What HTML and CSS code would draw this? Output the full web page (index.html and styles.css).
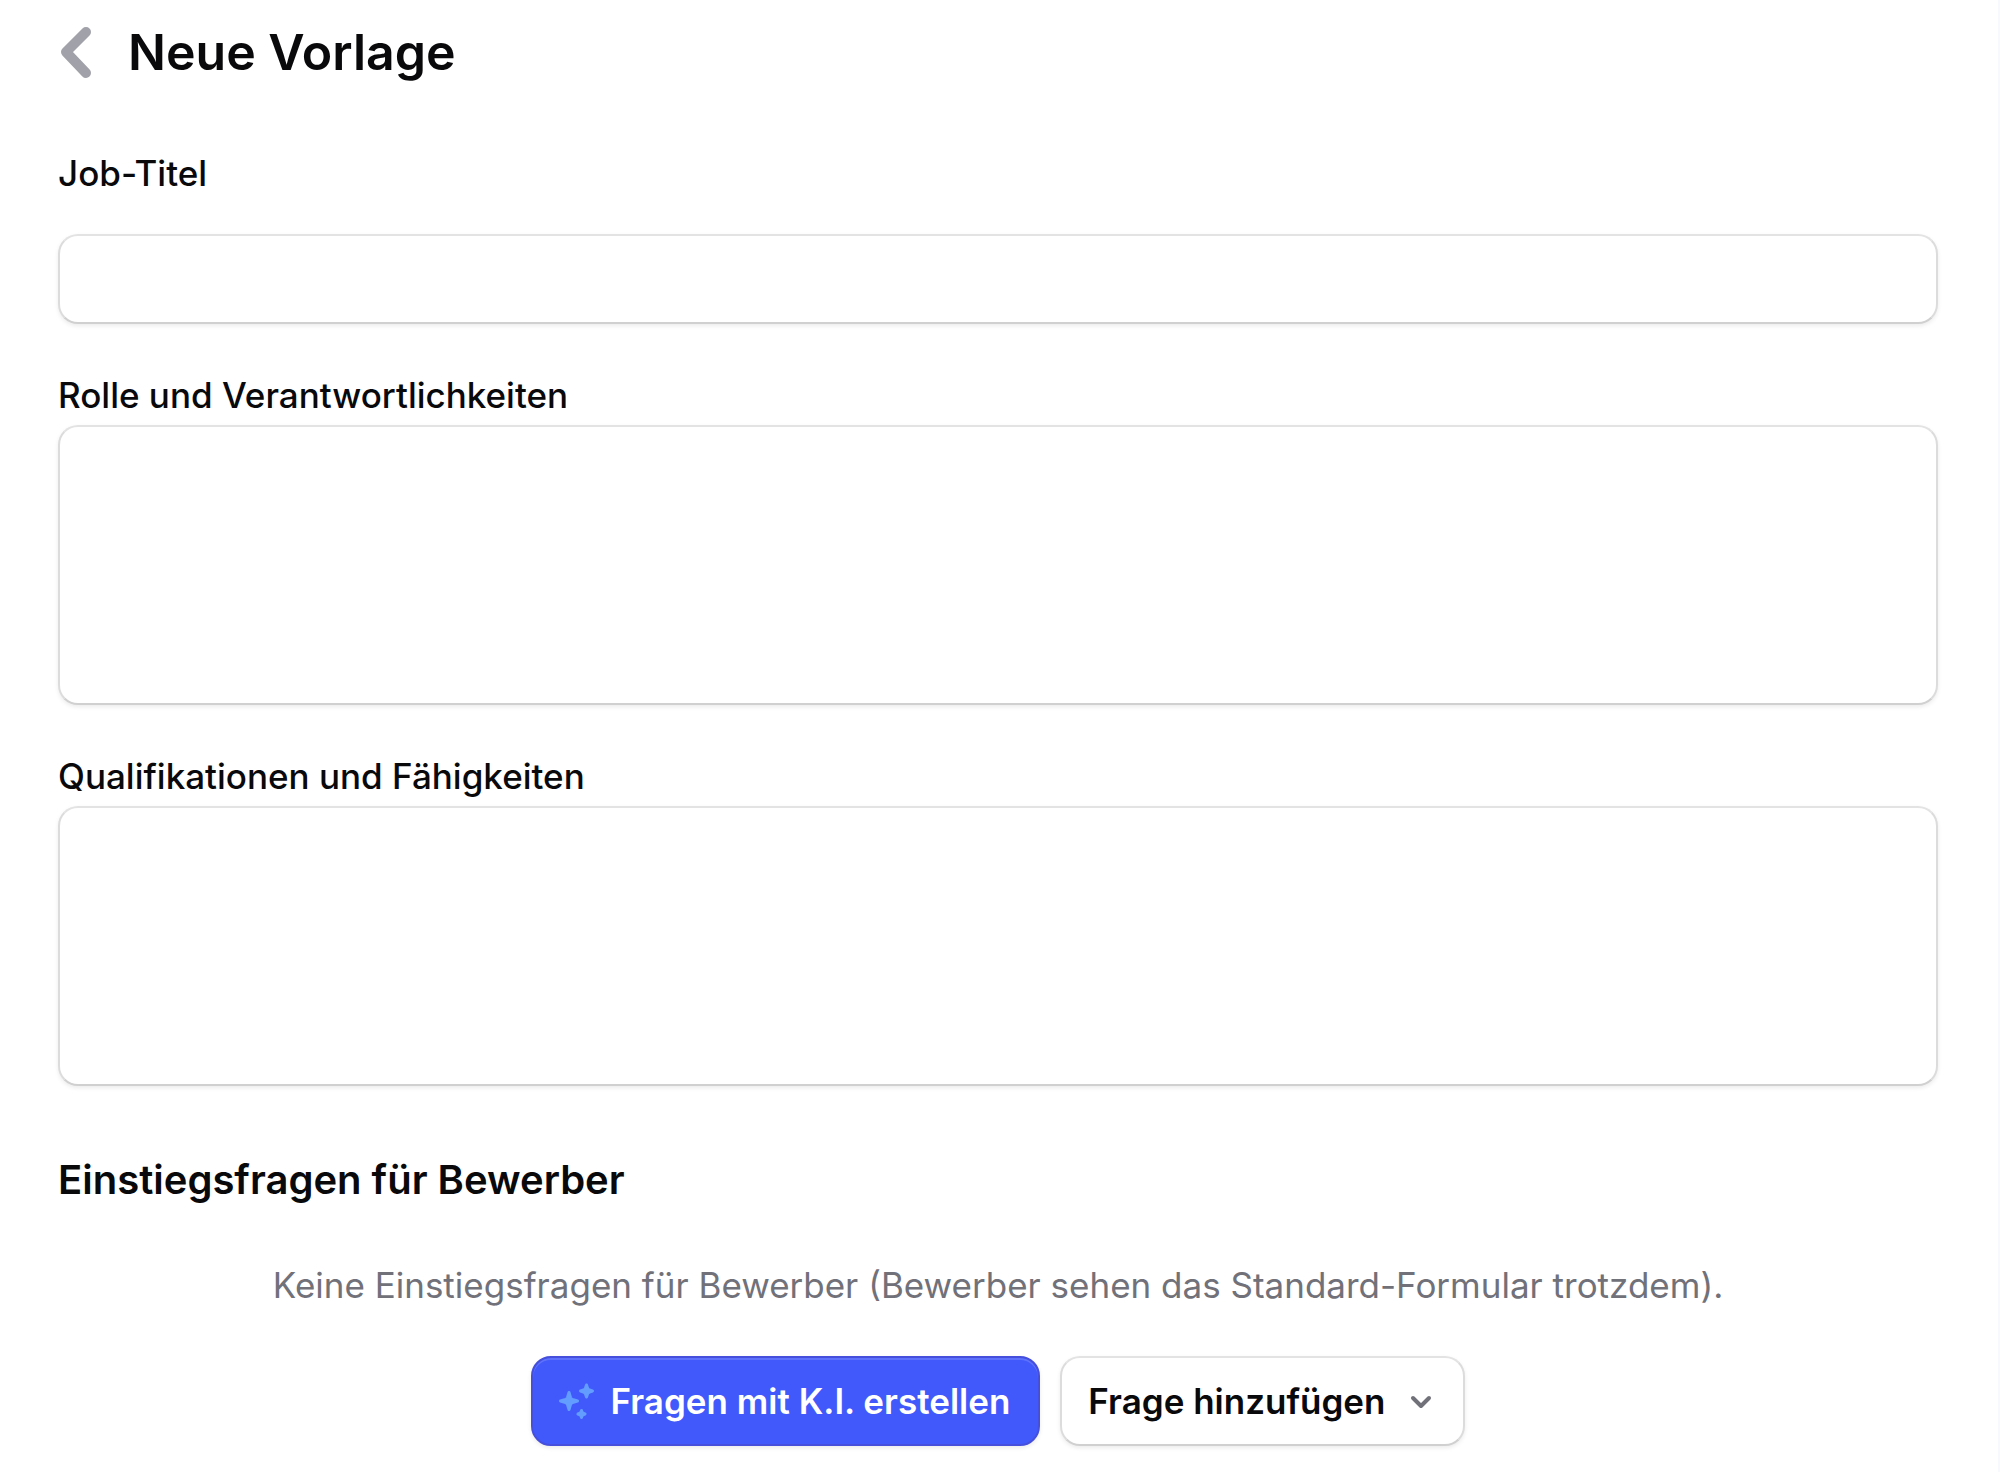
FILE: index.html
```html
<!DOCTYPE html>
<html lang="de">
<head>
  <meta charset="UTF-8" />
  <title>Neue Vorlage</title>
  <meta name="viewport" content="width=device-width, initial-scale=1" />
  <link rel="stylesheet" href="styles.css">
</head>
<body>
  <main class="page">
    <header class="page-header">
      <a class="back-link" href="#" aria-label="Zurück">
        <svg class="back-icon" viewBox="0 0 34 52" fill="none" stroke="currentColor" stroke-width="10" stroke-linecap="round" stroke-linejoin="round" aria-hidden="true">
          <path d="M28 6 L8 26 L28 47" />
        </svg>
      </a>
      <h1>Neue Vorlage</h1>
    </header>

    <form class="template-form">
      <div class="field field-title">
        <label for="jobTitle">Job-Titel</label>
        <input type="text" id="jobTitle" />
      </div>

      <div class="field">
        <label for="role">Rolle und Verantwortlichkeiten</label>
        <textarea id="role"></textarea>
      </div>

      <div class="field">
        <label for="skills">Qualifikationen und Fähigkeiten</label>
        <textarea id="skills"></textarea>
      </div>

      <section class="questions">
        <h2>Einstiegsfragen für Bewerber</h2>
        <p class="empty">Keine Einstiegsfragen für Bewerber (Bewerber sehen das Standard-Formular trotzdem).</p>
        <div class="actions">
          <button type="button" class="btn btn-primary">
            <svg class="sparkles" viewBox="0 0 36 36" fill="currentColor" stroke="currentColor" stroke-width="3" stroke-linejoin="round" aria-hidden="true">
              <path d="M10 9.500 L11.500 14.500 Q12 16 13.500 16.500 L18.500 18 L13.500 19.500 Q12 20 11.500 21.500 L10 26.500 L8.500 21.500 Q8 20 6.500 19.500 L1.500 18 L6.500 16.500 Q8 16 8.500 14.500Z" />
              <path d="M27.500 2 L28.500 5 Q29 6.500 30.500 7 L33.500 8 L30.500 9 Q29 9.500 28.500 11 L27.500 14 L26.500 11 Q26 9.500 24.500 9 L21.500 8 L24.500 7 Q26 6.500 26.500 5Z" />
              <path d="M22.500 27.500 L23.500 30 L26 31 L23.500 32 L22.500 34.500 L21.500 32 L19 31 L21.500 30Z" />
            </svg>
            Fragen mit K.I. erstellen
          </button>
          <button type="button" class="btn btn-secondary">
            Frage hinzufügen
            <svg class="chevron" viewBox="0 0 24 24" fill="none" stroke="currentColor" stroke-width="4" stroke-linecap="round" stroke-linejoin="round" aria-hidden="true">
              <path d="M4 9 L12 17 L20 9" />
            </svg>
          </button>
        </div>
      </section>
    </form>
  </main>
</body>
</html>
```
FILE: styles.css
```css
* {
  box-sizing: border-box;
}
body {
  margin: 0;
  font-family: Inter, sans-serif;
  background: #fff;
  color: #09090b;
}
.page {
  min-height: 100vh;
  padding: 20px 60px 26px 58px;
  border-right: 2px solid #f8f8ff;
}
.page-header {
  display: flex;
  align-items: center;
  gap: 36px;
  height: 64px;
}
.back-link {
  display: flex;
  color: #a1a1aa;
}
.back-icon {
  width: 34px;
  height: 52px;
}
h1 {
  margin: 0;
  font-size: 50px;
  line-height: 64px;
  font-weight: 600;
}
.template-form {
  display: flex;
  flex-direction: column;
  gap: 46px;
  margin-top: 64px;
}
.field {
  display: flex;
  flex-direction: column;
  gap: 5px;
}
.field-title {
  gap: 36px;
}
label {
  font-size: 35px;
  line-height: 50px;
  font-weight: 500;
}
input,
textarea {
  width: 100%;
  border: 2px solid #dcdcdc;
  border-top-color: #e3e3e3;
  border-bottom-color: #d0d0d0;
  border-radius: 20px;
  background: #fff;
  box-shadow: 0 2px 4px rgba(0, 0, 0, 0.08);
  padding: 16px 24px;
  font: inherit;
  font-size: 35px;
  resize: none;
}
input {
  height: 90px;
}
textarea {
  height: 280px;
}
h2 {
  margin: 0;
  font-size: 40px;
  line-height: 56px;
  font-weight: 600;
}
.questions {
  margin-top: 20px;
}
.empty {
  margin: 52px 0 46px;
  font-size: 35px;
  line-height: 50px;
  color: #71717a;
  text-align: center;
}
.actions {
  display: flex;
  justify-content: center;
  gap: 20px;
}
.btn {
  display: flex;
  align-items: center;
  height: 90px;
  padding: 0 28px 0 26px;
  border: 2px solid #dcdcdc;
  border-radius: 20px;
  font: inherit;
  font-size: 35px;
  font-weight: 600;
  box-shadow: 0 2px 4px rgba(0, 0, 0, 0.08);
  cursor: pointer;
}
.btn-primary {
  gap: 16px;
  color: #fff;
  background: #4159fb;
  border-color: #454fdc;
  box-shadow: inset 0 2px 0 rgba(255, 255, 255, 0.15), 0 2px 4px rgba(0, 0, 0, 0.08);
}
.btn-secondary {
  gap: 24px;
  padding-right: 30px;
  color: #09090b;
  background: #fff;
  border-top-color: #e3e3e3;
  border-bottom-color: #d0d0d0;
}
.sparkles {
  width: 36px;
  height: 36px;
  color: #629dff;
}
.chevron {
  width: 24px;
  height: 24px;
  color: #71717a;
}
```
